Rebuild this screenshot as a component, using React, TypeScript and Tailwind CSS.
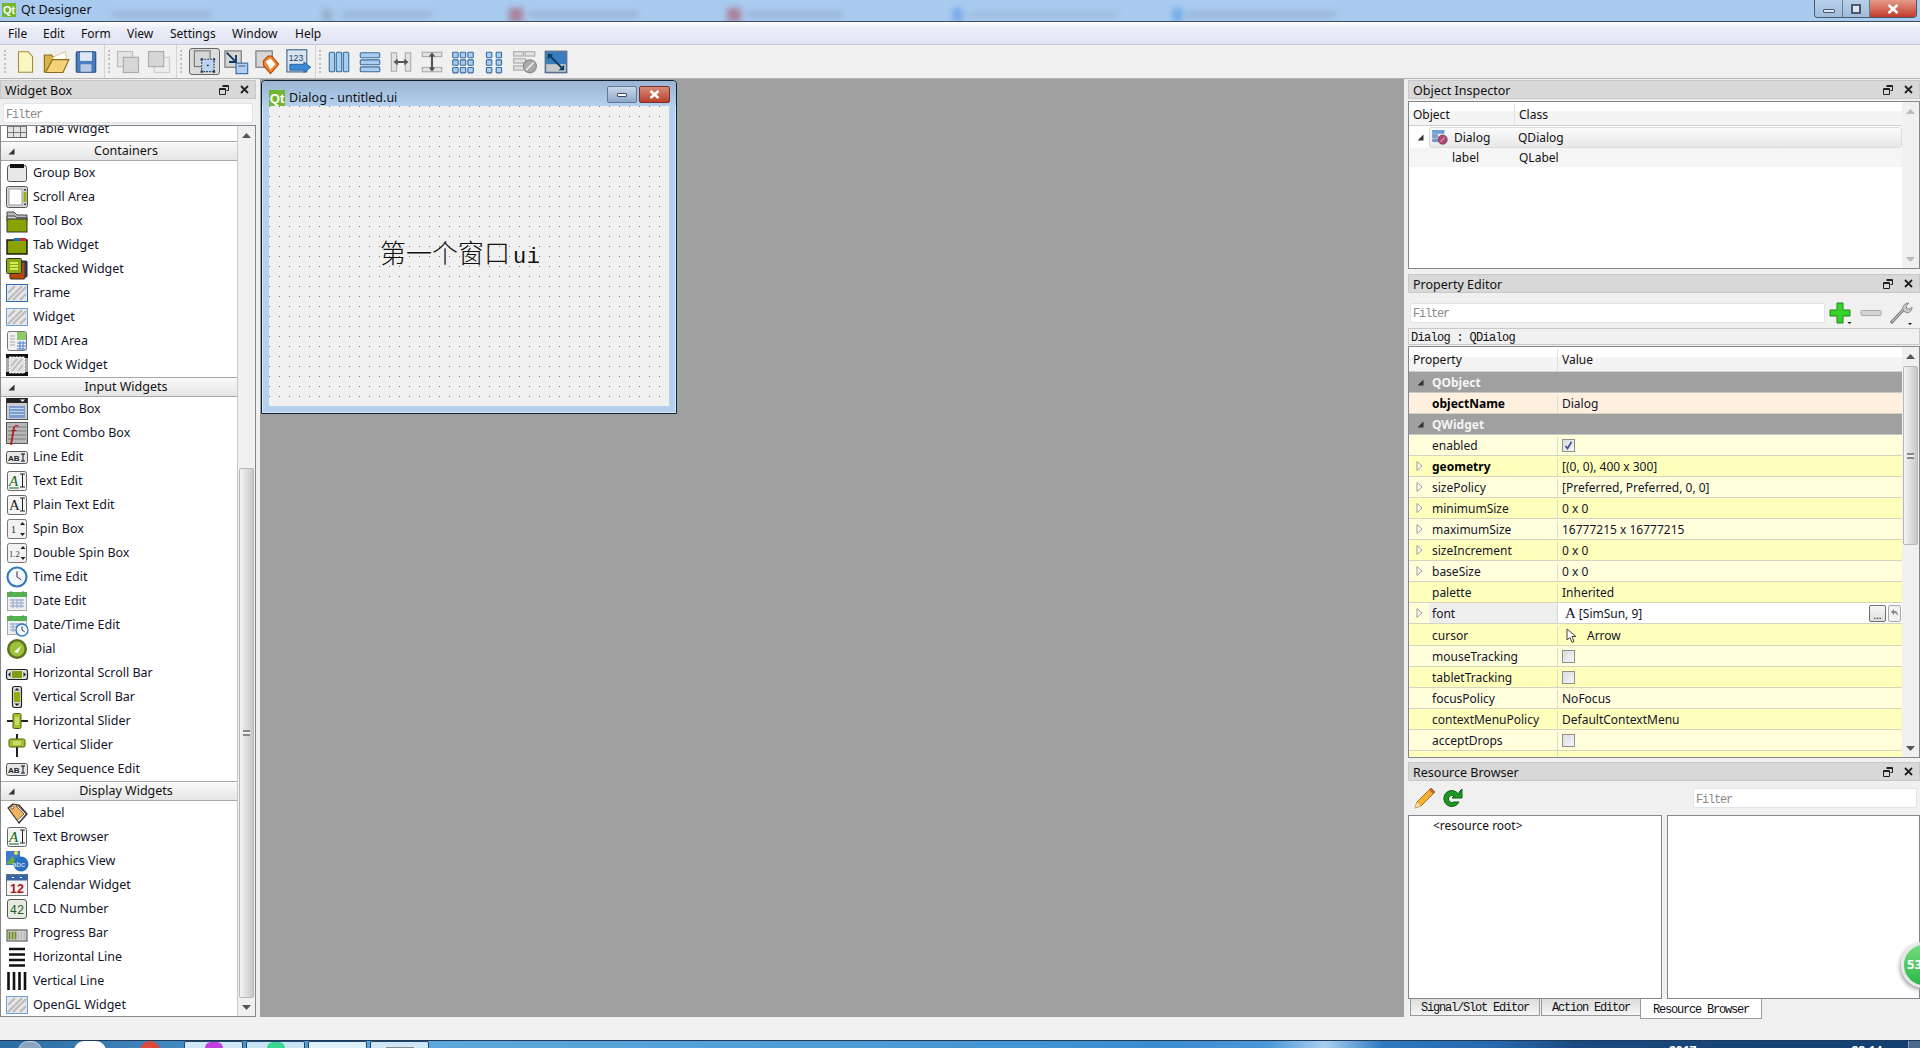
import React from 'react';

const mono = "font-['Liberation_Mono',monospace]";

const Hatch = ({ border }: { border: string }) => (
  <g>
    <rect x="1.5" y="3.5" width="21" height="17" fill="#e8e8e8" stroke={border} strokeWidth="1" />
    <path d="M3 12l7-7M3 19l14-14M8 19l13-13M15 19l6-6" stroke="#bdbdbd" strokeWidth="2.4" fill="none" />
    <rect x="1.5" y="3.5" width="21" height="17" fill="none" stroke={border} strokeWidth="1" />
  </g>
);

const LineEditIcon = () => (
  <g>
    <rect x="1.5" y="6.5" width="21" height="12" rx="2" fill="#e6e6e6" stroke="#555" />
    <text x="3" y="15.5" fontSize="8" fontWeight="700" fontFamily="Liberation Sans" fill="#222">AB</text>
    <path d="M16 9h4M16 16h4M18 9v7" stroke="#111" strokeWidth="1" />
  </g>
);

const TextEditIcon = ({ color }: { color: string }) => (
  <g>
    <rect x="2.5" y="2.5" width="19" height="19" rx="2" fill="#f4f4f4" stroke="#666" />
    <text x="4" y="17" fontSize="15" fontFamily="Liberation Serif" fontStyle={color === '#222' ? 'normal' : 'italic'} fill={color}>A</text>
    {color !== '#222' && <path d="M4 19h10" stroke={color} strokeWidth="1" />}
    <path d="M15 5h5M15 18h5M17.5 5v13" stroke="#222" strokeWidth="1" />
  </g>
);

const Clock = ({ cx, cy, r }: { cx: number; cy: number; r: number }) => (
  <g>
    <circle cx={cx} cy={cy} r={r} fill="#f4f8fc" stroke="#2f78bd" strokeWidth={r / 4.5} />
    <path d={`M${cx} ${cy - r * 0.6}V${cy}L${cx + r * 0.45} ${cy + r * 0.3}`} stroke="#333" strokeWidth="1" fill="none" />
  </g>
);

const Calendar = () => (
  <g>
    <rect x="2.5" y="3.5" width="19" height="18" fill="#eee" stroke="#aaa" />
    <rect x="2" y="3" width="20" height="5" fill="#55b04f" />
    <path d="M6 2v3M18 2v3" stroke="#777" />
    <path d="M5 11h14M5 14h14M5 17h14M8 10v9M12 10v9M16 10v9" stroke="#a5b5cf" strokeWidth="1.4" />
  </g>
);

const icons: Record<string, React.ReactNode> = {
  table: (
    <g>
      <rect x="2.5" y="4.5" width="19" height="16" fill="#e4e4e4" stroke="#666" />
      <path d="M2.5 9.5h19M2.5 15.5h19M8.5 4.5v16M15.5 4.5v16" stroke="#777" />
    </g>
  ),
  group: (
    <g>
      <rect x="2.5" y="4.5" width="19" height="16" rx="2" fill="#e8e8e8" stroke="#555" />
      <rect x="5" y="3" width="14" height="4" fill="#111" />
    </g>
  ),
  scroll: (
    <g>
      <rect x="1.5" y="1.5" width="21" height="21" rx="2" fill="#d8d8d8" stroke="#555" />
      <rect x="4" y="4" width="13" height="16" fill="#fff" stroke="#999" />
      <rect x="18.5" y="7" width="3" height="10" fill="#8fae10" />
      <path d="M18.5 5.5h3l-1.5-2zM18.5 18.5h3l-1.5 2z" fill="#222" />
    </g>
  ),
  toolbox: (
    <g>
      <path d="M2 3h7l3 3h10v3H2z" fill="#bbb" stroke="#444" />
      <path d="M2 7h8l2 2h10v3H2z" fill="#ccc" stroke="#444" />
      <rect x="2" y="10" width="20" height="13" fill="#8aa300" stroke="#333" />
    </g>
  ),
  tab: (
    <g>
      <rect x="2" y="7" width="20" height="14" fill="#8aa300" stroke="#111" strokeWidth="1.4" />
      <rect x="9" y="5" width="6" height="3" fill="#1e6fc0" />
      <rect x="15" y="5" width="6" height="3" fill="#c92a2a" />
    </g>
  ),
  stacked: (
    <g>
      <rect x="8" y="4" width="14" height="16" rx="1" fill="#0b4aa8" stroke="#223" />
      <rect x="5" y="5" width="15" height="17" rx="1" fill="#b8470b" stroke="#332" />
      <rect x="1.5" y="1.5" width="15" height="15" rx="1" fill="#8cab12" stroke="#333" />
      <path d="M5 6h8M5 9h8M5 12h8" stroke="#eaff70" strokeWidth="1.4" />
    </g>
  ),
  frame: <Hatch border="#2a6cb8" />,
  widget: <Hatch border="#6c9fd8" />,
  mdi: (
    <g>
      <rect x="2.5" y="2.5" width="19" height="19" rx="2" fill="#f2f2f2" stroke="#777" />
      <rect x="12" y="3" width="9" height="8" fill="#8ccb6c" />
      <path d="M5 7h5M5 10h5M5 13h5M5 16h5" stroke="#aaa" />
      <path d="M12 14h9M12 17h9M12 20h9M15 12v9M18 12v9" stroke="#4a80cc" />
    </g>
  ),
  dock: (
    <g>
      <rect x="1" y="1" width="22" height="22" fill="#111" />
      <rect x="1" y="5" width="22" height="14" fill="#aaa" />
      <rect x="4.5" y="4" width="15" height="16" fill="#e2e2e2" stroke="#fff" strokeDasharray="2 1.2" />
      <path d="M6 13l6-7M7 18l10-12M13 18l5-6" stroke="#bbb" strokeWidth="1.6" />
    </g>
  ),
  combo: (
    <g>
      <rect x="1.5" y="1.5" width="21" height="21" fill="#ccc" stroke="#555" />
      <rect x="1.5" y="1" width="21" height="5" fill="#222" />
      <path d="M15 2.5h5l-2.5 2.5z" fill="#fff" />
      <rect x="4" y="9" width="16" height="12" fill="#7a9cd0" />
      <path d="M5 11.5h14M5 14.5h14M5 17.5h14" stroke="#c4d6ee" />
    </g>
  ),
  fontcombo: (
    <g>
      <rect x="1.5" y="1.5" width="21" height="21" fill="#b8b8b8" stroke="#555" />
      <path d="M3 6h18M3 10h18M3 14h18M3 18h18" stroke="#8e8e8e" strokeWidth="1.5" />
      <text x="5" y="19" fontSize="21" fontStyle="italic" fontFamily="Liberation Serif" fill="#b01818">f</text>
    </g>
  ),
  line: <LineEditIcon />,
  text: <TextEditIcon color="#0c6a18" />,
  plain: <TextEditIcon color="#222" />,
  spin: (
    <g>
      <rect x="2.5" y="2.5" width="19" height="19" rx="2" fill="#f2f2f2" stroke="#777" />
      <text x="6" y="16" fontSize="10" fontFamily="Liberation Serif" fill="#222">1</text>
      <path d="M15 8h5l-2.5-3zM15 16h5l-2.5 3z" fill="#222" />
    </g>
  ),
  dspin: (
    <g>
      <rect x="2.5" y="2.5" width="19" height="19" rx="2" fill="#f2f2f2" stroke="#777" />
      <text x="4" y="16" fontSize="8.5" fontFamily="Liberation Serif" fill="#333">1.2</text>
      <path d="M15.5 8h5l-2.5-3zM15.5 16h5l-2.5 3z" fill="#222" />
    </g>
  ),
  time: <Clock cx={12} cy={12} r={9.5} />,
  date: <Calendar />,
  datetime: (
    <g>
      <Calendar />
      <Clock cx={17} cy={17} r={6} />
    </g>
  ),
  dial: (
    <g>
      <circle cx="12" cy="12" r="10" fill="#5d7120" />
      <circle cx="12" cy="12" r="7.5" fill="#9cc23a" />
      <path d="M9 15l7-6-3 7z" fill="#fff" />
    </g>
  ),
  hscroll: (
    <g>
      <rect x="1.5" y="8.5" width="21" height="10" rx="2" fill="#ddd" stroke="#222" strokeWidth="1.2" />
      <rect x="7" y="10" width="10" height="7" fill="#7f9e12" />
      <path d="M5.5 11v5l-2.5-2.5zM18.5 11v5l2.5-2.5z" fill="#222" />
    </g>
  ),
  vscroll: (
    <g>
      <rect x="7.5" y="1.5" width="9" height="21" rx="2" fill="#ddd" stroke="#222" strokeWidth="1.2" />
      <rect x="9" y="7" width="6" height="10" fill="#8fae10" />
      <path d="M9.5 5.5h5L12 3zM9.5 18.5h5L12 21z" fill="#222" />
    </g>
  ),
  hslider: (
    <g>
      <path d="M2 12h21" stroke="#222" strokeWidth="2" />
      <rect x="8" y="4.5" width="8" height="15" rx="1.5" fill="#a3c22c" stroke="#4a5d10" />
      <path d="M11 8v8M13 8v8" stroke="#eaf6b0" />
    </g>
  ),
  vslider: (
    <g>
      <path d="M12 1v23" stroke="#222" strokeWidth="2" />
      <rect x="4" y="6" width="16" height="8" rx="1.5" fill="#a3c22c" stroke="#4a5d10" />
      <path d="M8 9h8M8 11h8" stroke="#eaf6b0" />
    </g>
  ),
  label: (
    <g>
      <path d="M3 7l5-4 6 1 8 9-8 9z" fill="#f4b45e" stroke="#333" strokeWidth="1.2" strokeLinejoin="round" />
      <path d="M13 5l8 8-7 8-2-1.5 7-6.5-8-8z" fill="#fff" stroke="#333" strokeWidth=".7" />
      <circle cx="7.5" cy="6.5" r="1.4" fill="#fff" stroke="#333" strokeWidth=".7" />
    </g>
  ),
  graphics: (
    <g>
      <rect x="1" y="2" width="14" height="14" fill="#3a7cd0" />
      <path d="M2 14l5-7 4 5 3-3v6H2z" fill="#6ea840" />
      <circle cx="11" cy="4" r="2" fill="#f4e04a" />
      <circle cx="16" cy="15" r="7.5" fill="#2c6fbd" />
      <text x="7" y="18" fontSize="8" fontFamily="Liberation Sans" fill="#dfe9f6">abc</text>
    </g>
  ),
  calendar: (
    <g>
      <rect x="1.5" y="1.5" width="21" height="21" fill="#f4f4f4" stroke="#777" />
      <rect x="1.5" y="1.5" width="21" height="6" fill="#3866a8" />
      <path d="M7 4.5h2M15 4.5h2" stroke="#fff" />
      <text x="12" y="20" fontSize="12.5" fontWeight="700" textAnchor="middle" fontFamily="Liberation Sans" fill="#a81515">12</text>
    </g>
  ),
  lcd: (
    <g>
      <rect x="2.5" y="2.5" width="19" height="19" rx="2.5" fill="#e4ece0" stroke="#555" />
      <text x="12" y="16.5" fontSize="12" textAnchor="middle" fontFamily="Liberation Mono" fill="#1b5a22">42</text>
    </g>
  ),
  progress: (
    <g>
      <rect x="2" y="9" width="20" height="11" fill="#ddd" stroke="#444" />
      <path d="M4.5 10.5v8M7.5 10.5v8M10.5 10.5v8" stroke="#6f8c28" strokeWidth="2" />
      <path d="M13.5 10.5v8M16.5 10.5v8M19.5 10.5v8" stroke="#bbb" strokeWidth="2" />
    </g>
  ),
  hline: <path d="M4 4h16M4 9.5h16M4 15h16M4 20.5h16" stroke="#111" strokeWidth="2.6" />,
  vline: <path d="M3.5 3v18M9 3v18M14.5 3v18M20 3v18" stroke="#111" strokeWidth="2.6" />,
  newFile: <path d="M6 2.5h9l4 4.5v14.5H6z" fill="#fdf6c2" stroke="#a08c3c" />,
  open: (
    <g>
      <path d="M2 21V6h6l2 2h9v4" fill="#d9b24a" stroke="#8c6d1e" />
      <path d="M9 8l11-5 1 5-8 12z" fill="#fffdf0" stroke="#c0b080" strokeWidth=".6" />
      <path d="M3 21l6-11h14l-5 11z" fill="#f4d27a" stroke="#8c6d1e" />
    </g>
  ),
  save: (
    <g>
      <rect x="3" y="2.5" width="18" height="19" rx="1" fill="#4a7cc0" stroke="#254a80" />
      <rect x="6.5" y="3" width="11" height="8" fill="#dfe8f4" />
      <rect x="7" y="14" width="10" height="7" fill="#b6c9e0" />
    </g>
  ),
  back: (
    <g>
      <rect x="3" y="3" width="13" height="13" fill="#e4e4e4" stroke="#bbb" />
      <rect x="8" y="8" width="13" height="13" fill="#d6d6d6" stroke="#aaa" />
    </g>
  ),
  front: (
    <g>
      <rect x="8" y="8" width="13" height="13" fill="#eee" stroke="#ccc" />
      <rect x="3" y="3" width="13" height="13" fill="#d6d6d6" stroke="#aaa" />
    </g>
  ),
  editW: (
    <g>
      <rect x="3" y="2.5" width="14" height="14" fill="#d6d6d6" stroke="#777" />
      <rect x="9.5" y="10" width="11" height="11" fill="#bcd4f2" stroke="#334" strokeDasharray="1.5 1" />
      <circle cx="15" cy="15.5" r="0.8" fill="#224" />
      <path d="M8.5 9h2v2h-2zM19.5 9h2v2h-2zM8.5 20h2v2h-2zM19.5 20h2v2h-2z" fill="#223a66" />
    </g>
  ),
  signal: (
    <g>
      <rect x="2.5" y="2.5" width="14" height="14" fill="#d6d6d6" stroke="#777" />
      <rect x="12" y="13" width="10" height="9" fill="#b4cdec" stroke="#3a6ea5" />
      <path d="M14 15.5h6" stroke="#3a6ea5" />
      <path d="M4 4l7 7M12 6v6H6" stroke="#123a66" strokeWidth="1.6" fill="none" />
    </g>
  ),
  buddy: (
    <g>
      <rect x="2.5" y="2.5" width="14" height="14" fill="#d6d6d6" stroke="#777" />
      <path d="M9 11l4-4 3 0 6 7-7 8-6-7z" fill="#f08a30" stroke="#b8480a" />
      <path d="M11 11.5l4-2.5 4 5-4 4.5z" fill="#fff" />
    </g>
  ),
  taborder: (
    <g>
      <rect x="2.5" y="1.5" width="17" height="19" fill="#d8e4f2" stroke="#4a6a90" />
      <text x="4" y="11" fontSize="7.5" fontFamily="Liberation Sans" fill="#233a60">123</text>
      <path d="M5 14h12v-2l6 4.5-6 4.5v-2H5z" fill="#3a8ad8" stroke="#1e5c9c" strokeWidth=".7" />
    </g>
  ),
  hbox: (
    <g fill="#a9cdf0" stroke="#3a6c9c">
      <rect x="3" y="3" width="5" height="18" rx="1" />
      <rect x="9.5" y="3" width="5" height="18" rx="1" />
      <rect x="16" y="3" width="5" height="18" rx="1" />
    </g>
  ),
  vbox: (
    <g fill="#a9cdf0" stroke="#3a6c9c">
      <rect x="3" y="3.5" width="18" height="4.5" rx="1" />
      <rect x="3" y="10" width="18" height="4.5" rx="1" />
      <rect x="3" y="16.5" width="18" height="4.5" rx="1" />
    </g>
  ),
  splitH: (
    <g>
      <rect x="3" y="3.5" width="5" height="17" fill="#e2e2e2" stroke="#aaa" />
      <rect x="16" y="3.5" width="5" height="17" fill="#e2e2e2" stroke="#aaa" />
      <path d="M5 12l4-3v2h6V9l4 3-4 3v-2H9v2z" fill="#555" />
    </g>
  ),
  splitV: (
    <g>
      <rect x="3" y="3" width="18" height="4" fill="#e2e2e2" stroke="#aaa" />
      <rect x="3" y="17" width="18" height="4" fill="#e2e2e2" stroke="#aaa" />
      <path d="M12 3l3 4h-2v10h2l-3 4-3-4h2V7H9z" fill="#555" />
    </g>
  ),
  grid: (
    <g fill="#a9cdf0" stroke="#3a6c9c">
      {[3, 10, 17].map(y =>
        [2.5, 9.5, 16.5].map(x => <rect key={`${x}-${y}`} x={x} y={y} width="5" height="5" rx=".8" />)
      )}
    </g>
  ),
  form: (
    <g fill="#a9cdf0" stroke="#3a6c9c">
      {[3, 10, 17].map(y =>
        [5, 14].map(x => <rect key={`${x}-${y}`} x={x} y={y} width="5" height="5" rx=".8" />)
      )}
    </g>
  ),
  breakL: (
    <g>
      <g fill="#e0e0e0" stroke="#aaa">
        <rect x="1.5" y="2.5" width="9" height="4" />
        <rect x="12" y="2.5" width="9" height="4" />
        <rect x="1.5" y="9" width="11" height="4" />
        <rect x="1.5" y="15.5" width="11" height="4" />
      </g>
      <circle cx="16.5" cy="16" r="6" fill="#aaa" stroke="#888" />
      <path d="M13 19.5l7-7" stroke="#eee" strokeWidth="1.5" />
    </g>
  ),
  adjust: (
    <g>
      <rect x="2" y="2" width="20" height="20" fill="#3a7cc0" stroke="#5a6a7a" />
      <rect x="3" y="14" width="18" height="7" fill="#c8c8c8" />
      <path d="M5 5l14 14" stroke="#0b3a5c" strokeWidth="1.8" />
      <path d="M4.5 4.5h5l-5 5zM19.5 19.5h-5l5-5z" fill="#0b3a5c" />
    </g>
  ),
  inspector: (
    <g>
      <g fill="#6aa0dc" stroke="#3a6ca0" strokeWidth=".6">
        <rect x="1" y="2" width="16" height="4" />
        <rect x="1" y="8" width="7" height="4" />
        <rect x="1" y="14" width="7" height="4" />
      </g>
      <circle cx="15" cy="15" r="6.5" fill="#b04a70" stroke="#70304a" />
      <path d="M12 18l6-6" stroke="#dde" strokeWidth="1.3" />
    </g>
  ),
  plus: (
    <g>
      <path d="M9 2h6v7h7v6h-7v7H9v-7H2V9h7z" fill="#35d42a" stroke="#1c8a18" strokeLinejoin="round" />
      <path d="M19.5 21h4l-2 2z" fill="#111" />
    </g>
  ),
  minus: <rect x="2" y="9.5" width="20" height="5" rx="1" fill="#d4d4d4" stroke="#aaa" />,
  wrench: (
    <g>
      <path d="M2 22L15 8" stroke="#777" strokeWidth="3" />
      <path d="M3 21L15 8" stroke="#ddd" strokeWidth="1" />
      <path d="M14 9c-1-3 1-7 6-7l-3 3 1 3 3 0 2-2c0 5-4 7-7 5z" fill="#c8c8c8" stroke="#888" />
      <path d="M19 22h4l-2 2z" fill="#111" />
    </g>
  ),
  pencil: (
    <g>
      <path d="M2 22l2-6L18 2l4 4L8 20z" fill="#f4b030" stroke="#a8701a" />
      <path d="M18 2l4 4-2 2-4-4z" fill="#c8663a" />
      <path d="M2 22l2-6 4 4z" fill="#f2dcb0" />
    </g>
  ),
  refresh: (
    <g>
      <path d="M19 9a8 8 0 1 0 0 7h-5a3.6 3.6 0 1 1 0-6l-2 2h10V3l-3 3z" fill="#1a9a22" stroke="#0c6010" />
    </g>
  ),
};

const Icon = ({ name, size = 24 }: { name: string; size?: number }) => (
  <svg width={size} height={size} viewBox="0 0 24 24" className="shrink-0">
    {icons[name]}
  </svg>
);

const QtLogo = ({ size, className }: { size: number; className?: string }) => (
  <div
    style={{ width: size, height: size, fontSize: size - 3 }}
    className={`flex shrink-0 items-center justify-center bg-[#73b72e] font-bold leading-none text-white font-['Liberation_Sans',sans-serif] ${className ?? ''}`}
  >
    Qt
  </div>
);

const DockTitle = ({ title }: { title: string }) => (
  <div className="flex h-[19px] shrink-0 items-center justify-between border border-[#c8c8c8] bg-[#d8d8d8] pl-[4px] pr-[6px] text-[12.5px] text-[#111]">
    <span className="pt-[4px]">{title}</span>
    <div className="flex items-center gap-[11px]">
      <svg width="10" height="10" viewBox="0 0 10 10">
        <path d="M3.5 .5h6v5h-2M.5 3.5h6v6h-6zM.5 4.5h6M3.5 1.5h6" fill="none" stroke="#222" />
      </svg>
      <svg width="9" height="9" viewBox="0 0 9 9">
        <path d="M1 1l7 7M8 1L1 8" stroke="#222" strokeWidth="1.8" />
      </svg>
    </div>
  </div>
);

const Filter = ({ className }: { className: string }) => (
  <div className={`flex h-[20px] items-center rounded-[2px] border border-[#dfe3ea] bg-white pl-[2px] pt-[3px] text-[12px] tracking-[-1.2px] text-[#8a8a8a] ${mono} ${className}`}>
    Filter
  </div>
);

const ExpandedArrow = () => (
  <svg width="7" height="7" viewBox="0 0 7 7" className="shrink-0">
    <path d="M6.5 .5v6H.5z" fill="#333" />
  </svg>
);

const CollapsedArrow = () => (
  <svg width="7" height="10" viewBox="0 0 7 10" className="shrink-0">
    <path d="M1 .5l5 4.5-5 4.5z" fill="#fff" stroke="#999" />
  </svg>
);

const Scrollbar = ({ top, thumb, grip = true, light = false }: { top: number; thumb: number; grip?: boolean; light?: boolean }) => (
  <div className="flex w-[17px] shrink-0 flex-col items-center bg-[#f0f0f0]">
    <div style={{ height: top }} className="flex w-full shrink-0 justify-center">
      <svg width="9" height="5" viewBox="0 0 9 5" className="mt-[7px]">
        <path d="M0 5l4.500-5 4.500 5z" fill={light ? '#bbb' : '#555'} />
      </svg>
    </div>
    {thumb > 0 && (
      <div style={{ height: thumb }} className="flex w-[15px] shrink-0 items-center justify-center rounded-[2px] border border-[#b8b8b8] bg-gradient-to-r from-[#f4f4f4] to-[#c8c8c8]">
        {grip && <div className="h-[6px] w-[7px] border-y-2 border-[#888] bg-[#f0f0f0]" />}
      </div>
    )}
    <div className="flex-1" />
    <svg width="9" height="5" viewBox="0 0 9 5" className="mb-[6px]">
      <path d="M0 0l4.500 5 4.500-5z" fill={light ? '#bbb' : '#555'} />
    </svg>
  </div>
);

const WidgetRow = ({ icon, label, className }: { icon: string; label: string; className?: string }) => (
  <div className={`flex h-[24px] shrink-0 items-center pl-[4px] text-[12.5px] text-[#14142a] ${className ?? ''}`}>
    <Icon name={icon} />
    <span className="ml-[4px]">{label}</span>
  </div>
);

const GroupHeader = ({ title }: { title: string }) => (
  <div className="relative flex h-[20px] shrink-0 items-center justify-center border-y border-[#a8a8a8] bg-gradient-to-b from-[#fafafa] to-[#e4e4e4] pl-[14px] text-[12.5px] text-[#111]">
    <div className="absolute left-[7px]">
      <ExpandedArrow />
    </div>
    {title}
  </div>
);

const groups: { title: string; rows: [string, string][] }[] = [
  {
    title: 'Containers',
    rows: [
      ['group', 'Group Box'],
      ['scroll', 'Scroll Area'],
      ['toolbox', 'Tool Box'],
      ['tab', 'Tab Widget'],
      ['stacked', 'Stacked Widget'],
      ['frame', 'Frame'],
      ['widget', 'Widget'],
      ['mdi', 'MDI Area'],
      ['dock', 'Dock Widget'],
    ],
  },
  {
    title: 'Input Widgets',
    rows: [
      ['combo', 'Combo Box'],
      ['fontcombo', 'Font Combo Box'],
      ['line', 'Line Edit'],
      ['text', 'Text Edit'],
      ['plain', 'Plain Text Edit'],
      ['spin', 'Spin Box'],
      ['dspin', 'Double Spin Box'],
      ['time', 'Time Edit'],
      ['date', 'Date Edit'],
      ['datetime', 'Date/Time Edit'],
      ['dial', 'Dial'],
      ['hscroll', 'Horizontal Scroll Bar'],
      ['vscroll', 'Vertical Scroll Bar'],
      ['hslider', 'Horizontal Slider'],
      ['vslider', 'Vertical Slider'],
      ['line', 'Key Sequence Edit'],
    ],
  },
  {
    title: 'Display Widgets',
    rows: [
      ['label', 'Label'],
      ['text', 'Text Browser'],
      ['graphics', 'Graphics View'],
      ['calendar', 'Calendar Widget'],
      ['lcd', 'LCD Number'],
      ['progress', 'Progress Bar'],
      ['hline', 'Horizontal Line'],
      ['vline', 'Vertical Line'],
      ['widget', 'OpenGL Widget'],
    ],
  },
];

const WidgetBox = () => (
  <div className="flex w-[256px] shrink-0 flex-col pt-px">
    <DockTitle title="Widget Box" />
    <Filter className="mx-[3px] mt-[4px] h-[20px] shrink-0" />
    <div className="mt-[2px] flex flex-1 overflow-hidden border-x border-y border-[#828790] bg-white">
      <div className="flex flex-1 flex-col overflow-hidden border-r border-[#c8c8c8]">
        <WidgetRow icon="table" label="Table Widget" className="-mt-[9px]" />
        {groups.map(g => (
          <React.Fragment key={g.title}>
            <GroupHeader title={g.title} />
            {g.rows.map(([icon, label]) => (
              <WidgetRow key={label} icon={icon} label={label} />
            ))}
          </React.Fragment>
        ))}
      </div>
      <Scrollbar top={342} thumb={530} />
    </div>
  </div>
);

const DialogWindow = () => (
  <div className="ml-px mt-px flex h-[334px] w-[416px] flex-col rounded-t-[4px] border border-[#10202e] bg-[#b5d0ec] px-[7px] pb-[7px] shadow-[inset_0_0_0_1px_#d0e8f8]">
    <div className="-mx-[7px] flex h-[25px] shrink-0 items-end rounded-t-[4px] bg-gradient-to-b from-[#9bb5d3] to-[#b4d0ee] pl-[7px] pr-[6px]">
      <QtLogo size={16} />
      <span className="ml-[4px] text-[12.5px] leading-[16px] text-[#111]">Dialog - untitled.ui</span>
      <div className="mb-[3px] ml-auto flex items-center gap-[2px]">
        <div className="flex h-[17px] w-[30px] items-center justify-center rounded-[2px] border border-[#5f7a98] bg-gradient-to-b from-[#c8d8ec] to-[#8fa8c8]">
          <div className="h-[4px] w-[10px] rounded-[1px] border border-[#445] bg-white" />
        </div>
        <div className="flex h-[17px] w-[31px] items-center justify-center rounded-[2px] border border-[#7a3028] bg-gradient-to-b from-[#d88a78] to-[#b8402c]">
          <svg width="11" height="9" viewBox="0 0 11 9">
            <path d="M1.500 1l8 7M9.500 1l-8 7" stroke="#fff" strokeWidth="2.500" />
          </svg>
        </div>
      </div>
    </div>
    <div className="h-[300px] w-[400px] bg-[#f0f0f0] bg-[radial-gradient(circle_at_0.5px_0.5px,#777_0.5px,transparent_0.8px)] bg-[length:10px_10px] pl-[111px] pt-[129px] text-[26px] leading-[34px] text-[#111]">
      <span className="font-light font-['Noto_Sans_CJK_SC',sans-serif]">第一个窗口</span>
      <span className={`ml-[3px] text-[22px] tracking-[0.6px] ${mono}`}>ui</span>
    </div>
  </div>
);

const headerBg = 'bg-[linear-gradient(#ffffff_0%,#ffffff_40%,#f4f4f4_41%,#f4f4f4_100%)]';

const ObjectInspector = () => (
  <div className="mt-[2px] flex h-[168px] shrink-0 border border-[#828790] bg-white">
    <div className="flex flex-1 flex-col">
      <div className={`flex h-[24px] shrink-0 items-center border-b border-[#d0d0d0] pt-[2px] text-[12px] text-[#111] ${headerBg}`}>
        <div className="flex h-full w-[106px] items-center border-r border-[#e0e0e0] pl-[4px]">Object</div>
        <div className="pl-[4px]">Class</div>
      </div>
      <div className="mt-px flex h-[21px] shrink-0 items-center text-[12px] text-[#111]">
        <div className="ml-[8px] w-[12px]">
          <ExpandedArrow />
        </div>
        <div className="flex h-full flex-1 items-center rounded-[3px] border border-[#dcdcdc] bg-gradient-to-b from-[#fbfbfb] to-[#e8e8e8] pl-[2px]">
          <Icon name="inspector" size={17} />
          <span className="ml-[5px] w-[64px]">Dialog</span>
          <span>QDialog</span>
        </div>
      </div>
      <div className="flex h-[19px] shrink-0 items-center bg-[#f5f5f5] pl-[43px] text-[12px] text-[#111]">
        <span className="w-[67px]">label</span>
        <span>QLabel</span>
      </div>
    </div>
    <Scrollbar top={20} thumb={0} light />
  </div>
);

type Prop = { name: string; value?: string; bg?: string; bold?: boolean; arrow?: boolean; check?: boolean | 'on'; kind?: string };

const pale = 'bg-[#ffffdc]';
const yellow = 'bg-[#ffffbc]';

const props: Prop[] = [
  { name: 'QObject', kind: 'group' },
  { name: 'objectName', value: 'Dialog', bg: 'bg-[#feefdf]', bold: true },
  { name: 'QWidget', kind: 'group' },
  { name: 'enabled', check: 'on', bg: pale },
  { name: 'geometry', value: '[(0, 0), 400 x 300]', bg: yellow, bold: true, arrow: true },
  { name: 'sizePolicy', value: '[Preferred, Preferred, 0, 0]', bg: pale, arrow: true },
  { name: 'minimumSize', value: '0 x 0', bg: yellow, arrow: true },
  { name: 'maximumSize', value: '16777215 x 16777215', bg: pale, arrow: true },
  { name: 'sizeIncrement', value: '0 x 0', bg: yellow, arrow: true },
  { name: 'baseSize', value: '0 x 0', bg: pale, arrow: true },
  { name: 'palette', value: 'Inherited', bg: yellow },
  { name: 'font', kind: 'font', arrow: true },
  { name: 'cursor', kind: 'cursor', bg: yellow },
  { name: 'mouseTracking', check: true, bg: pale },
  { name: 'tabletTracking', check: true, bg: yellow },
  { name: 'focusPolicy', value: 'NoFocus', bg: pale },
  { name: 'contextMenuPolicy', value: 'DefaultContextMenu', bg: yellow },
  { name: 'acceptDrops', check: true, bg: pale },
];

const Check = ({ on }: { on: boolean }) => (
  <div className="-mt-[2px] flex h-[13px] w-[13px] items-center justify-center border border-[#8e8f8f] bg-gradient-to-br from-[#d8dbe2] to-[#f6f6f6]">
    {on && (
      <svg width="9" height="9" viewBox="0 0 9 9">
        <path d="M1.500 5l2 2.500L7.500 1" fill="none" stroke="#3c4f8c" strokeWidth="1.600" />
      </svg>
    )}
  </div>
);

const PropRow = ({ p }: { p: Prop }) => {
  if (p.kind === 'group')
    return (
      <div className="flex h-[21px] shrink-0 items-center border-b border-[#c8c8c8] bg-[#a0a0a0] pt-[2px] text-[12px] font-bold text-[#f4f4f4]">
        <div className="-mt-[2px] flex w-[23px] shrink-0 justify-center">
          <ExpandedArrow />
        </div>
        {p.name}
      </div>
    );
  if (p.kind === 'font')
    return (
      <div className="flex h-[21px] shrink-0 items-center border-b border-[#d4d4c0] bg-[#ffffdc] text-[12px] text-[#14142a]">
        <div className="flex h-full w-[149px] shrink-0 items-center border-r border-[#d8d8c8]">
          <div className="flex h-full w-[20px] shrink-0 items-center justify-end pr-[6px]">
            <CollapsedArrow />
          </div>
          <div className="flex h-full flex-1 items-center bg-[#eeeeee] pl-[3px] pt-[2px]">font</div>
        </div>
        <div className="flex h-full flex-1 items-center bg-white pl-[7px]">
          <span className={`text-[15px] leading-none font-['Liberation_Serif',serif]`}>A</span>
          <span className="ml-[3px] pt-[2px]">[SimSun, 9]</span>
          <div className="ml-auto mr-px flex items-center gap-[2px]">
            <div className="flex h-[17px] w-[17px] items-end justify-center rounded-[2px] border border-[#707070] bg-gradient-to-b from-[#f8f8f8] to-[#dcdcdc] text-[10px] leading-[12px]">...</div>
            <div className="flex h-[17px] w-[13px] items-center justify-center rounded-[2px] border border-[#aaa] bg-[#f2f2f2]">
              <svg width="8" height="8" viewBox="0 0 8 8">
                <path d="M0 3l3-3v2c3 0 4 2 4 5-1-2-2-3-4-3v2z" fill="#888" />
              </svg>
            </div>
          </div>
        </div>
      </div>
    );
  return (
    <div className={`flex shrink-0 items-center border-b border-[#d4d4c0] pt-[2px] text-[12px] text-[#14142a] ${p.kind === 'cursor' ? 'h-[22px]' : 'h-[21px]'} ${p.bg}`}>
      <div className="flex h-full w-[149px] shrink-0 items-center border-r border-[#dcdcd0]">
        <div className="-mt-[2px] flex h-full w-[23px] shrink-0 items-center justify-end pr-[9px]">{p.arrow && <CollapsedArrow />}</div>
        <span className={p.bold ? 'font-bold text-black' : ''}>{p.name}</span>
      </div>
      <div className="flex h-full flex-1 items-center pl-[4px]">
        {p.value}
        {p.check && <Check on={p.check === 'on'} />}
        {p.kind === 'cursor' && (
          <>
            <svg width="11" height="16" viewBox="0 0 11 16" className="ml-[4px]">
              <path d="M1 1v11l3-2.500 2 5 2-1-2-5h4z" fill="#fff" stroke="#444" />
            </svg>
            <span className="ml-[10px]">Arrow</span>
          </>
        )}
      </div>
    </div>
  );
};

const PropertyEditor = () => (
  <>
    <div className="mt-[5px]">
      <DockTitle title="Property Editor" />
    </div>
    <div className="mt-[9px] flex h-[21px] shrink-0 items-center">
      <Filter className="ml-[2px] w-[415px]" />
      <div className="ml-[3px] flex items-center gap-[7px]">
        <Icon name="plus" />
        <Icon name="minus" />
        <div className="-ml-[1px]">
          <Icon name="wrench" />
        </div>
      </div>
    </div>
    <div className={`mt-[5px] flex h-[17px] shrink-0 items-center border border-[#c8c8c8] pl-[2px] pt-[2px] text-[12px] tracking-[-0.7px] text-[#111] ${mono}`}>
      Dialog : QDialog
    </div>
    <div className="mt-[1px] flex h-[412px] shrink-0 overflow-hidden border border-[#828790] bg-white">
      <div className="flex min-w-0 flex-1 flex-col">
        <div className={`flex h-[25px] shrink-0 items-center border-b border-[#d0d0d0] pt-[2px] text-[12px] text-[#111] ${headerBg}`}>
          <div className="flex h-full w-[149px] items-center border-r border-[#e0e0e0] pl-[4px]">Property</div>
          <div className="pl-[4px]">Value</div>
        </div>
        {props.map(p => (
          <PropRow key={p.name} p={p} />
        ))}
        <div className="flex flex-1">
          <div className="w-[149px] border-r border-[#dcdcd0] bg-[#ffffbc]" />
          <div className="flex-1 bg-[#ffffbc]" />
        </div>
      </div>
      <Scrollbar top={19} thumb={179} />
    </div>
  </>
);

const ResourceBrowser = () => (
  <>
    <div className="mt-[4px]">
      <DockTitle title="Resource Browser" />
    </div>
    <div className="flex h-[34px] shrink-0 items-center pl-[5px] pr-[3px]">
      <Icon name="pencil" />
      <div className="ml-[3px]">
        <Icon name="refresh" />
      </div>
      <Filter className="ml-auto w-[224px]" />
    </div>
    <div className="relative flex h-[184px] shrink-0 gap-[5px] overflow-hidden">
      <div className="w-[254px] border border-[#828790] bg-white pl-[24px] pt-[2px] text-[12px] leading-[16px] text-[#111]">&lt;resource root&gt;</div>
      <div className="flex-1 border border-[#828790] bg-white" />
      <div className="absolute left-[493px] top-[127px] flex h-[46px] w-[46px] items-center rounded-full border-[3px] border-[#e8e8e8] bg-gradient-to-b from-[#6fdc7c] to-[#27b84a] pl-[3px] text-[13px] font-bold text-white shadow-[-1px_2px_4px_#999]">
        53
      </div>
    </div>
    <div className={`flex items-start pl-[2px] text-[12px] tracking-[-1.2px] text-[#111] ${mono}`}>
      <div className="flex h-[17px] w-[130px] items-center justify-center border-x border-b border-[#9a9a9a] bg-gradient-to-b from-[#dcdcdc] to-[#f4f4f4] pt-[2px]">Signal/Slot Editor</div>
      <div className="ml-px flex h-[17px] w-[100px] items-center justify-center border-x border-b border-[#9a9a9a] bg-gradient-to-b from-[#dcdcdc] to-[#f4f4f4] pt-[2px]">Action Editor</div>
      <div className="-ml-px flex h-[20px] w-[122px] items-center justify-center border-x border-b border-[#9a9a9a] bg-white pt-[2px]">Resource Browser</div>
    </div>
  </>
);

const Grip = () => (
  <div className="flex h-[26px] w-[3px] shrink-0 flex-col justify-between py-[1px]">
    {[0, 1, 2, 3, 4, 5].map(i => (
      <div key={i} className="h-[2px] w-[2px] bg-[#c0c0c0]" />
    ))}
  </div>
);

const ToolSep = ({ ml }: { ml: string }) => <div className={`h-[33px] w-px shrink-0 bg-[#d4d4d4] ${ml}`} />;

const Toolbar = () => (
  <div className="flex h-[34px] shrink-0 items-center border-b border-[#b4b4b4] bg-[#f0f0f0] pl-[4px]">
    <Grip />
    <div className="ml-[5px]"><Icon name="newFile" size={26} /></div>
    <div className="ml-[4px]"><Icon name="open" size={28} /></div>
    <div className="ml-[3px]"><Icon name="save" size={26} /></div>
    <ToolSep ml="ml-[5px]" />
    <div className="ml-[3px]"><Grip /></div>
    <div className="ml-[3px]"><Icon name="back" size={28} /></div>
    <div className="ml-[3px]"><Icon name="front" size={28} /></div>
    <ToolSep ml="ml-[3px]" />
    <div className="ml-[3px]"><Grip /></div>
    <div className="ml-[6px] flex h-[27px] w-[31px] items-center justify-center rounded-[3px] border border-[#666] bg-[#dcdcdc]">
      <Icon name="editW" size={27} />
    </div>
    <div className="ml-[2px]"><Icon name="signal" size={28} /></div>
    <div className="ml-[3px]"><Icon name="buddy" size={28} /></div>
    <div className="ml-[3px]"><Icon name="taborder" size={28} /></div>
    <ToolSep ml="ml-[3px]" />
    <div className="ml-[3px]"><Grip /></div>
    <div className="ml-[4px] flex items-center gap-[5px]">
      {['hbox', 'vbox', 'splitH', 'splitV', 'grid', 'form', 'breakL', 'adjust'].map(n => (
        <Icon key={n} name={n} size={26} />
      ))}
    </div>
  </div>
);

const TitleBar = () => (
  <div className="flex h-[22px] shrink-0 items-start overflow-hidden border-b border-[#3a4a5a] bg-[#a9cbf0]">
    <div className="mt-[3px] ml-[2px]">
      <QtLogo size={14} />
    </div>
    <span className="ml-[5px] mt-[2px] text-[12.5px] leading-[16px] text-[#111]">Qt Designer</span>
    <div className="ml-[20px] mt-[11px] flex h-[7px] items-center opacity-60 blur-[3px]">
      <div className="h-[5px] w-[100px] bg-[#8a9bb5]" />
      <div className="ml-[110px] h-[12px] w-[10px] bg-[#8a9bb0]" />
      <div className="ml-[10px] h-[5px] w-[90px] bg-[#8a9bb5]" />
      <div className="ml-[77px] h-[14px] w-[14px] bg-[#a85060]" />
      <div className="ml-[6px] h-[5px] w-[110px] bg-[#8a9bb5]" />
      <div className="ml-[88px] h-[14px] w-[14px] bg-[#a85060]" />
      <div className="ml-[6px] h-[5px] w-[96px] bg-[#8a9bb5]" />
      <div className="ml-[110px] h-[14px] w-[9px] bg-[#4a8ee0]" />
      <div className="ml-[6px] h-[5px] w-[150px] bg-[#96a9c8]" />
      <div className="ml-[55px] h-[14px] w-[9px] bg-[#4a8ee0]" />
      <div className="ml-[4px] h-[5px] w-[150px] bg-[#8a9bb5]" />
    </div>
    <div className="ml-auto mr-[3px] flex h-[18px] w-[103px] shrink-0 overflow-hidden rounded-b-[4px] border border-t-0 border-[#4a5a6e]">
      <div className="flex w-[28px] items-center justify-center border-r border-[#6a7a90] bg-gradient-to-b from-[#b8d0ea] to-[#a0bcda]">
        <div className="mt-[4px] h-[4px] w-[12px] rounded-[1px] border border-[#4a5a6e] bg-[#dde6f0]" />
      </div>
      <div className="flex w-[27px] items-center justify-center border-r border-[#6a7a90] bg-gradient-to-b from-[#b8d0ea] to-[#a0bcda]">
        <div className="h-[10px] w-[10px] border-2 border-[#4a5a6e] bg-[#dde6f0]" />
      </div>
      <div className="flex flex-1 items-center justify-center bg-gradient-to-b from-[#e49a88] to-[#c0392b]">
        <svg width="12" height="10" viewBox="0 0 12 10">
          <path d="M1.500 1l9 8M10.500 1l-9 8" stroke="#fff" strokeWidth="2.500" />
        </svg>
      </div>
    </div>
  </div>
);

const MenuBar = () => (
  <div className="flex h-[23px] shrink-0 items-center border-b border-[#c4cad8] bg-[linear-gradient(#ffffff_0%,#ebedf7_30%,#e0e4f2_100%)] pl-[8px] pt-[2px] text-[12px] text-[#111]">
    {[
      ['File', 'w-[35px]'],
      ['Edit', 'w-[38px]'],
      ['Form', 'w-[46px]'],
      ['View', 'w-[43px]'],
      ['Settings', 'w-[62px]'],
      ['Window', 'w-[63px]'],
      ['Help', 'w-[40px]'],
    ].map(([t, w]) => (
      <span key={t} className={w}>
        {t}
      </span>
    ))}
  </div>
);

const Taskbar = () => (
  <div className="flex h-[8px] shrink-0 items-start overflow-hidden border-t border-[#1e3a58] bg-[linear-gradient(90deg,#2a6ca5_0%,#5fa8dc_20%,#4d9cd6_45%,#3d8cd0_60%,#4a96d8_66%,#a8d0f0_69%,#2f78c0_72%,#2668ac_78%,#1a4a80_82%,#143e70_100%)]">
    <div className="ml-[18px] h-[20px] w-[24px] shrink-0 rounded-full border border-[#c8d4e0] bg-[#8aa4c0]" />
    <div className="ml-[32px] h-[20px] w-[32px] shrink-0 rounded-full bg-white" />
    <div className="ml-[34px] h-[20px] w-[20px] shrink-0 rounded-full bg-[#e0483a]" />
    <div className="ml-[24px] flex h-[20px] w-[59px] shrink-0 justify-center rounded-t-[2px] border border-[#24486c] bg-[#d0e8f8]">
      <div className="h-[12px] w-[18px] rounded-full bg-[#c040e0]" />
    </div>
    <div className="ml-[3px] flex h-[20px] w-[59px] shrink-0 justify-center rounded-t-[2px] border border-[#24486c] bg-[#c8e4f4]">
      <div className="h-[12px] w-[18px] rounded-full bg-[#38d890]" />
    </div>
    <div className="ml-[3px] h-[20px] w-[59px] shrink-0 rounded-t-[2px] border border-[#24486c] bg-[#e0f0fa]" />
    <div className="ml-[3px] flex h-[20px] w-[59px] shrink-0 justify-center rounded-t-[2px] border border-[#24486c] bg-[#cfe6f6] pt-[5px]">
      <div className="h-[4px] w-[28px] bg-[#8a8a8a]" />
    </div>
    <span className="ml-[1240px] mt-[3px] shrink-0 text-[12px] font-bold leading-[14px] text-white">2017</span>
    <span className="ml-[155px] mt-[3px] shrink-0 text-[12px] font-bold leading-[14px] text-white">22:14</span>
    <div className="ml-auto h-[8px] w-[12px] shrink-0 border-l border-[#8aa0b8] bg-[#4a6a8c]" />
  </div>
);

export default function App() {
  return (
    <div className="flex h-[1048px] w-[1920px] flex-col overflow-hidden bg-[#f0f0f0] font-['Noto_Sans','Liberation_Sans',sans-serif] text-[12px]">
      <TitleBar />
      <MenuBar />
      <Toolbar />
      <div className="flex h-[938px] shrink-0">
        <WidgetBox />
        <div className="ml-[4px] w-[1144px] shrink-0 bg-[#a0a0a0]">
          <DialogWindow />
        </div>
        <div className="ml-[4px] flex w-[512px] shrink-0 flex-col pt-px">
          <DockTitle title="Object Inspector" />
          <ObjectInspector />
          <PropertyEditor />
          <ResourceBrowser />
        </div>
      </div>
      <div className="h-[23px] shrink-0" />
      <Taskbar />
    </div>
  );
}
